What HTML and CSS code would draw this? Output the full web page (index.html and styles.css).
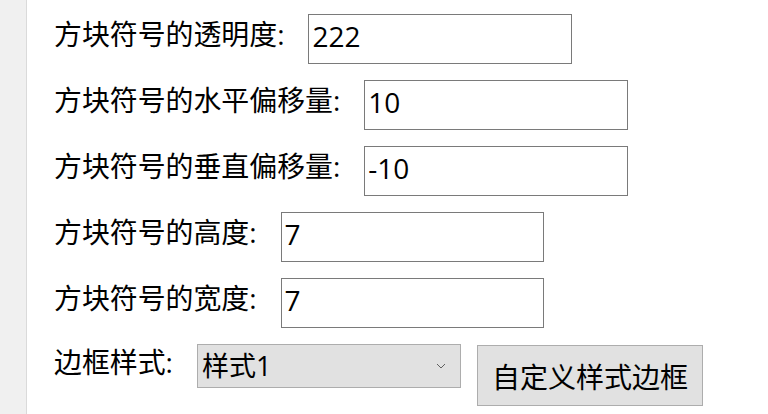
FILE: index.html
```html
<!DOCTYPE html>
<html lang="zh-CN">
<head>
<meta charset="utf-8">
<title>方块符号设置</title>
<link rel="stylesheet" href="styles.css">
</head>
<body>
<div class="app">
  <div class="strip"></div>
  <div class="form">
    <div class="row">
      <span class="label">方块符号的透明度:</span>
      <input class="field" type="text" value="222">
    </div>
    <div class="row">
      <span class="label">方块符号的水平偏移量:</span>
      <input class="field" type="text" value="10">
    </div>
    <div class="row">
      <span class="label">方块符号的垂直偏移量:</span>
      <input class="field" type="text" value="-10">
    </div>
    <div class="row">
      <span class="label">方块符号的高度:</span>
      <input class="field field-narrow" type="text" value="7">
    </div>
    <div class="row">
      <span class="label">方块符号的宽度:</span>
      <input class="field field-narrow" type="text" value="7">
    </div>
    <div class="row row-last">
      <span class="label">边框样式:</span>
      <div class="combo">
        <span class="combo-text">样式1</span>
        <svg class="chevron" width="10" height="6" viewBox="0 0 10 6"><path d="M1 1 L5 5 L9 1" fill="none" stroke="#606060" stroke-width="1"/></svg>
      </div>
      <button class="btn" type="button">自定义样式边框</button>
    </div>
  </div>
</div>
</body>
</html>
```

FILE: styles.css
```css
html, body {
  margin: 0;
  padding: 0;
  background: #ffffff;
}
body {
  font-family: "Open Sans", "Noto Sans CJK SC", sans-serif;
  color: #000;
}
.app {
  display: flex;
  height: 414px;
  overflow: hidden;
}
.strip {
  width: 26px;
  flex: none;
  background: #f0f0f0;
  border-right: 1px solid #dadada;
}
.form {
  display: flex;
  flex-direction: column;
  gap: 16px;
  padding: 14px 0 0 27px;
}
.row {
  display: flex;
  align-items: flex-start;
  height: 50px;
}
.label {
  font-size: 27.9px;
  line-height: 30px;
  margin-top: 5px;
  margin-right: 24px;
  white-space: nowrap;
}
.field {
  box-sizing: border-box;
  width: 264px;
  height: 50px;
  margin: 0;
  border: 1px solid #7a7a7a;
  border-radius: 0;
  padding: 0 4px 6px 3px;
  font-family: "Open Sans", "Noto Sans CJK SC", sans-serif;
  font-size: 28px;
  color: #000;
  background: #fff;
  outline: none;
}
.field-narrow {
  width: 263px;
}
.row-last {
  height: 62px;
}
.row-last .label {
  margin-top: 3px;
}
.combo {
  box-sizing: border-box;
  width: 264px;
  height: 44px;
  background: #e1e1e1;
  border: 1px solid #adadad;
  display: flex;
  align-items: center;
  justify-content: space-between;
  padding: 0 14px 0 4px;
}
.combo-text {
  font-size: 27px;
  line-height: 30px;
}
.chevron {
  display: block;
}
.btn {
  box-sizing: border-box;
  width: 226px;
  height: 61px;
  margin: 1px 0 0 16px;
  background: #e1e1e1;
  border: 1px solid #adadad;
  border-radius: 0;
  padding: 0;
  font-family: "Open Sans", "Noto Sans CJK SC", sans-serif;
  font-size: 28px;
  color: #000;
}
```
